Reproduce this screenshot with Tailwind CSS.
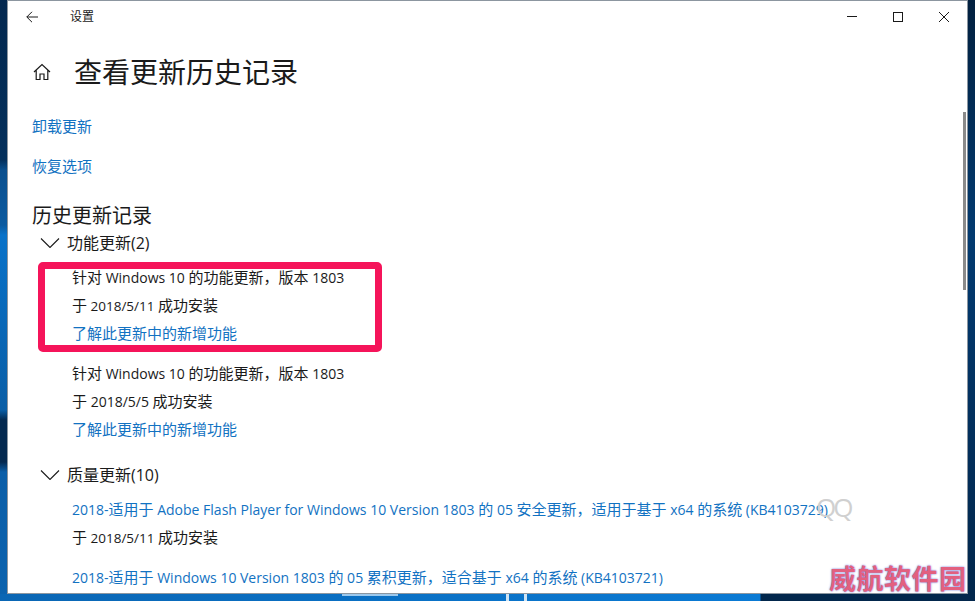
<!DOCTYPE html>
<html lang="zh-CN">
<head>
<meta charset="utf-8"/>
<title>设置</title>
<script src="https://cdn.jsdelivr.net/npm/@tailwindcss/browser@4"></script>
</head>
<body class="w-[975px] h-[601px] overflow-hidden font-['Open_Sans','Noto_Sans_CJK_SC',sans-serif] text-[15px] text-[#1a1a1a]">
<div class="flex h-[594px]">
  <!-- desktop, left of the window -->
  <div class="w-[7px] bg-[linear-gradient(180deg,#03284f_0px,#04305c_160px,#0a4f8e_170px,#0a5aa0_225px,#0872c9_235px,#0a5ea6_410px,#04294f_420px,#04294f_462px,#0a5ea8_472px,#0a62ae_594px)]"></div>
  <!-- settings window -->
  <div class="relative w-[961px] h-[594px] bg-white border border-[#8c96a0] overflow-hidden">
    <div class="flex items-center h-[31px] pl-[18px]">
      <svg class="w-[12px] h-[12px]" viewBox="0 0 12 12" fill="none" stroke="#1a1a1a" stroke-width="1"><path d="M12 6H.8M6 .8.8 6 6 11.2"/></svg>
      <span class="ml-[32px] text-[12px]">设置</span>
      <div class="ml-auto flex items-center gap-[36px] pr-[18px]">
        <div class="w-[10px] h-px bg-[#1a1a1a]"></div>
        <div class="w-[10px] h-[10px] border border-[#1a1a1a]"></div>
        <svg class="w-[10px] h-[10px]" viewBox="0 0 10 10" fill="none" stroke="#1a1a1a" stroke-width="1"><path d="M0 0l10 10M10 0 0 10"/></svg>
      </div>
    </div>
    <div class="flex items-center h-[42px] mt-[19px] pl-[25px]">
      <svg class="w-[18px] h-[18px]" viewBox="0 0 18 18" fill="none" stroke="#1a1a1a" stroke-width="1.2"><path d="M1 9 9 1.5 17 9M3.2 7.5V16.5H7V11h4v5.5h3.8V7.5"/></svg>
      <h1 class="ml-[23px] text-[28px] leading-[42px]">查看更新历史记录</h1>
    </div>
    <div class="pl-[24px] text-[#1272c2]">
      <div class="mt-[21px] h-[24px] leading-[24px]">卸载更新</div>
      <div class="mt-[16px] h-[24px] leading-[24px]">恢复选项</div>
    </div>
    <h2 class="pl-[24px] mt-[24px] text-[20px] leading-[27px]">历史更新记录</h2>
    <div class="flex items-center h-[28px] pl-[32px]">
      <svg class="w-[20px] h-[10px]" viewBox="0 0 20 10" fill="none" stroke="#1a1a1a" stroke-width="1.1"><path d="M1 .5 10 9.5 19 .5"/></svg>
      <span class="ml-[7px] text-[16px]">功能更新(2)</span>
    </div>
    <div class="pl-[64px] mt-[6px]">
      <div class="h-[28px] leading-[28px]">针对<span class="text-[14px]"> Windows 10 </span>的功能更新，版本<span class="text-[14px]"> 1803</span></div>
      <div class="h-[28px] leading-[28px]">于<span class="text-[13.5px]"> 2018/5/11 </span>成功安装</div>
      <div class="h-[28px] leading-[28px] text-[#1272c2]">了解此更新中的新增功能</div>
      <div class="h-[28px] leading-[28px] mt-[12px]">针对<span class="text-[14px]"> Windows 10 </span>的功能更新，版本<span class="text-[14px]"> 1803</span></div>
      <div class="h-[28px] leading-[28px]">于<span class="text-[14px]"> 2018/5/5 </span>成功安装</div>
      <div class="h-[28px] leading-[28px] text-[#1272c2]">了解此更新中的新增功能</div>
    </div>
    <div class="flex items-center h-[28px] pl-[32px] mt-[18px]">
      <svg class="w-[20px] h-[10px]" viewBox="0 0 20 10" fill="none" stroke="#1a1a1a" stroke-width="1.1"><path d="M1 .5 10 9.5 19 .5"/></svg>
      <span class="ml-[7px] text-[16px]">质量更新(10)</span>
    </div>
    <div class="pl-[64px] mt-[6px]">
      <div class="h-[28px] leading-[28px] text-[#1272c2] whitespace-nowrap"><span class="text-[14px]">2018-</span>适用于<span class="text-[14px]"> Adobe Flash Player for Windows 10 Version 1803 </span>的<span class="text-[14px]"> 05 </span>安全更新，适用于基于<span class="text-[14px]"> x64 </span>的系统<span class="text-[14px]"> (KB4103729)</span></div>
      <div class="h-[28px] leading-[28px]">于<span class="text-[13.5px]"> 2018/5/11 </span>成功安装</div>
      <div class="h-[28px] leading-[28px] mt-[12px] text-[#1272c2] whitespace-nowrap"><span class="text-[14px]">2018-</span>适用于<span class="text-[14px]"> Windows 10 Version 1803 </span>的<span class="text-[14px]"> 05 </span>累积更新，适合基于<span class="text-[14px]"> x64 </span>的系统<span class="text-[14px]"> (KB4103721)</span></div>
    </div>
    <!-- scrollbar thumb -->
    <div class="absolute right-[1px] top-[111px] w-[3px] h-[178px] bg-[#8a8a8a]"></div>
    <!-- red annotation box -->
    <div class="absolute left-[30px] top-[261px] w-[344px] h-[90px] border-[7px] border-[#f5145a] rounded-[5px]"></div>
    <!-- watermarks -->
    <div class="absolute left-[808px] top-[490px] text-[#d0d0d0] text-[26px] leading-[32px] tracking-[-3px]">QQ</div>
    <div class="absolute left-[821px] top-[563px] whitespace-nowrap text-[27px] leading-[29px] tracking-[0.5px] font-bold text-[#e2607f] [text-shadow:0_0_2px_#5a60d0]">威航软件园</div>
  </div>
  <!-- desktop, right of the window -->
  <div class="w-[7px] bg-[linear-gradient(180deg,#02203f_0%,#023a70_40%,#02305e_70%,#02274c_100%)]"></div>
</div>
<!-- desktop, below the window -->
<div class="relative h-[7px] bg-[linear-gradient(90deg,#0a66b4_0px,#0a7ad4_760px,#02274c_761px,#02274c_975px)] overflow-hidden">
  <div class="absolute left-[342px] top-0 w-[56px] h-[2px] bg-[#9cc8ec]"></div>
  <div class="absolute left-[506px] top-0 w-[3px] h-[7px] bg-[#cfe4f5]"></div>
  <div class="absolute left-[524px] top-0 w-[3px] h-[7px] bg-[#cfe4f5]"></div>
</div>
</body>
</html>
